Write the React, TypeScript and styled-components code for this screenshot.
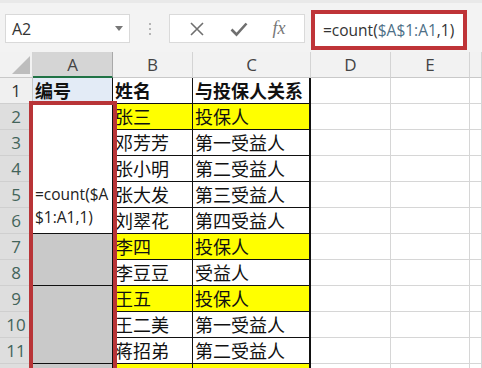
import { FC } from 'react';
import styled, { createGlobalStyle } from 'styled-components';

const GlobalStyle = createGlobalStyle`
  html, body {
    margin: 0;
    padding: 0;
    background: #ffffff;
    overflow: hidden;
  }
  body {
    font-family: 'Open Sans', 'Noto Sans CJK SC', sans-serif;
  }
`;

const Page = styled.div`
  width: 482px;
  height: 368px;
  overflow: hidden;
  position: relative;
  background: #ffffff;
`;

const Toolbar = styled.div`
  height: 52px;
  box-sizing: border-box;
  background: #f3f3f3;
  border-top: 3px solid #e9e9e9;
  display: flex;
  align-items: center;
  padding: 0 0 0 5px;
`;

const NameBox = styled.div`
  width: 125px;
  height: 29px;
  box-sizing: border-box;
  background: #ffffff;
  border: 1px solid #d9d9d9;
  display: flex;
  align-items: center;
  justify-content: space-between;
  padding: 0 6px 0 6px;
  font-size: 16px;
  color: #333;
  margin-top: 2px;
`;

const Dots = styled.div`
  width: 39px;
  display: flex;
  flex-direction: column;
  align-items: center;
  gap: 3px;
  margin-top: 2px;

  span {
    width: 2px;
    height: 2px;
    background: #b5b5b5;
  }
`;

const ButtonBox = styled.div`
  width: 136px;
  height: 29px;
  box-sizing: border-box;
  background: #ffffff;
  border: 1px solid #dadada;
  display: flex;
  align-items: center;
  justify-content: space-around;
  padding: 0 6px;
  margin-top: 2px;
`;

const Fx = styled.span`
  font-family: 'Liberation Serif', serif;
  font-style: italic;
  font-size: 18px;
  color: #777;
`;

const FormulaBox = styled.div`
  margin-left: 6px;
  width: 156px;
  height: 40px;
  box-sizing: border-box;
  border: 4px solid #bf3438;
  background: #ffffff;
  display: flex;
  align-items: center;
  padding-left: 8px;
  font-size: 15.5px;
  color: #333;
  margin-top: 4px;
  white-space: nowrap;
`;

const Ref = styled.span`
  color: #4d6f86;
`;

const Sheet = styled.div`
  display: grid;
  grid-template-columns: 33px 80px 80px 118px 80px 79px 1fr;
  grid-auto-rows: 26px;
`;

type CellProps = {
  $col: number;
  $row: number;
  $rowSpan?: number;
  $bg?: string;
  $line?: string;
  $edge?: boolean;
};

const Cell = styled.div<CellProps>`
  grid-column: ${({ $col }) => $col};
  grid-row: ${({ $row, $rowSpan }) => `${$row} / span ${$rowSpan ?? 1}`};
  box-sizing: border-box;
  background: ${({ $bg }) => $bg ?? '#ffffff'};
  border-right: ${({ $edge }) => ($edge ? 2 : 1)}px solid ${({ $line }) => $line ?? '#d6d6d6'};
  border-bottom: 1px solid ${({ $line }) => $line ?? '#d6d6d6'};
  display: flex;
  align-items: flex-end;
  padding: 0 0 1px 2px;
  font-family: 'Noto Sans CJK SC', sans-serif;
  font-size: 18px;
  line-height: 24px;
  color: #111;
  overflow: hidden;
  white-space: nowrap;
`;

const HeadCell = styled.div<{ $col: number; $selected?: boolean }>`
  grid-column: ${({ $col }) => $col};
  grid-row: 1;
  box-sizing: border-box;
  background: ${({ $selected }) => ($selected ? '#d5d5d5' : '#f2f2f2')};
  border-right: 1px solid ${({ $selected }) => ($selected ? '#a9a9a9' : '#d4d4d4')};
  border-bottom: ${({ $selected }) => ($selected ? '2px solid #217346' : '1px solid #c9c9c9')};
  display: flex;
  align-items: center;
  justify-content: center;
  font-size: 17px;
  color: #444;
  position: relative;
`;

const RowHead = styled.div<{ $row: number; $selected?: boolean }>`
  grid-column: 1;
  grid-row: ${({ $row }) => $row};
  box-sizing: border-box;
  background: ${({ $selected }) => ($selected ? '#dedede' : '#f0f0f0')};
  border-right: 1px solid #c6c6c6;
  border-bottom: 1px solid #cfcfcf;
  display: flex;
  align-items: center;
  justify-content: center;
  font-size: 17px;
  color: ${({ $selected }) => ($selected ? '#43645a' : '#333')};
`;

const Bold = styled.span`
  font-weight: 700;
`;

const MergedText = styled.div`
  font-family: 'Open Sans', sans-serif;
  font-size: 15.5px;
  line-height: 23px;
  color: #222;
  white-space: normal;
  padding-bottom: 3px;
`;

const Selection = styled.div`
  position: absolute;
  left: 29px;
  top: 101px;
  width: 88px;
  height: 300px;
  box-sizing: border-box;
  border: 4px solid #b83437;
  pointer-events: none;
`;

const YELLOW = '#ffff00';
const GRAY = '#c9c9c9';
const BLACK = '#111111';

const rows: { name: string; rel: string; hi?: boolean }[] = [
  { name: '张三', rel: '投保人', hi: true },
  { name: '邓芳芳', rel: '第一受益人' },
  { name: '张小明', rel: '第二受益人' },
  { name: '张大发', rel: '第三受益人' },
  { name: '刘翠花', rel: '第四受益人' },
  { name: '李四', rel: '投保人', hi: true },
  { name: '李豆豆', rel: '受益人' },
  { name: '王五', rel: '投保人', hi: true },
  { name: '王二美', rel: '第一受益人' },
  { name: '蒋招弟', rel: '第二受益人' },
  { name: '', rel: '', hi: true },
];

const CloseIcon: FC = () => (
  <svg width="16" height="16" viewBox="0 0 16 16">
    <path d="M2 2 L14 14 M14 2 L2 14" stroke="#6f6f6f" strokeWidth="1.6" />
  </svg>
);

const CheckIcon: FC = () => (
  <svg width="18" height="16" viewBox="0 0 18 16">
    <path d="M1.5 8.5 L6.5 13.5 L16.5 2.5" stroke="#6f6f6f" strokeWidth="2.6" fill="none" />
  </svg>
);

const DropIcon: FC = () => (
  <svg width="8" height="5" viewBox="0 0 8 5">
    <path d="M0 0 L8 0 L4 5 Z" fill="#777" />
  </svg>
);

const Corner: FC = () => (
  <svg width="18" height="18" viewBox="0 0 18 18" style={{ position: 'absolute', right: 2, bottom: 3 }}>
    <path d="M18 0 L18 18 L0 18 Z" fill="#bdbdbd" />
  </svg>
);

export default function App() {
  return (
    <Page>
      <GlobalStyle />
      <Toolbar>
        <NameBox>
          <span>A2</span>
          <DropIcon />
        </NameBox>
        <Dots>
          <span />
          <span />
          <span />
        </Dots>
        <ButtonBox>
          <CloseIcon />
          <CheckIcon />
          <Fx>fx</Fx>
        </ButtonBox>
        <FormulaBox>
          =count(<Ref>$A$1:A1</Ref>,1)
        </FormulaBox>
      </Toolbar>

      <Sheet>
        <HeadCell $col={1}>
          <Corner />
        </HeadCell>
        <HeadCell $col={2} $selected>A</HeadCell>
        <HeadCell $col={3}>B</HeadCell>
        <HeadCell $col={4}>C</HeadCell>
        <HeadCell $col={5}>D</HeadCell>
        <HeadCell $col={6}>E</HeadCell>
        <HeadCell $col={7} />

        {Array.from({ length: 12 }, (_, i) => (
          <RowHead key={i} $row={i + 2} $selected={i > 0}>
            {i < 11 ? i + 1 : ''}
          </RowHead>
        ))}

        <Cell $col={2} $row={2} $bg="#e3ebf6" $line={BLACK}>
          <Bold>编号</Bold>
        </Cell>
        <Cell $col={3} $row={2} $line={BLACK}>
          <Bold>姓名</Bold>
        </Cell>
        <Cell $col={4} $row={2} $line={BLACK} $edge>
          <Bold>与投保人关系</Bold>
        </Cell>

        <Cell $col={2} $row={3} $rowSpan={5} $line={BLACK}>
          <MergedText>
            =count($A
            <br />
            $1:A1,1)
          </MergedText>
        </Cell>
        <Cell $col={2} $row={8} $rowSpan={2} $bg={GRAY} $line={BLACK} />
        <Cell $col={2} $row={10} $rowSpan={3} $bg={GRAY} $line={BLACK} />
        <Cell $col={2} $row={13} $bg={GRAY} $line={BLACK} />

        {rows.map((r, i) => (
          <>
            <Cell key={`b${i}`} $col={3} $row={i + 3} $bg={r.hi ? YELLOW : undefined} $line={BLACK}>
              {r.name}
            </Cell>
            <Cell key={`c${i}`} $col={4} $row={i + 3} $bg={r.hi ? YELLOW : undefined} $line={BLACK} $edge>
              {r.rel}
            </Cell>
            <Cell key={`d${i}`} $col={5} $row={i + 3} />
            <Cell key={`e${i}`} $col={6} $row={i + 3} />
            <Cell key={`f${i}`} $col={7} $row={i + 3} />
          </>
        ))}
        <Cell $col={5} $row={2} />
        <Cell $col={6} $row={2} />
        <Cell $col={7} $row={2} />
      </Sheet>

      <Selection />
    </Page>
  );
}
